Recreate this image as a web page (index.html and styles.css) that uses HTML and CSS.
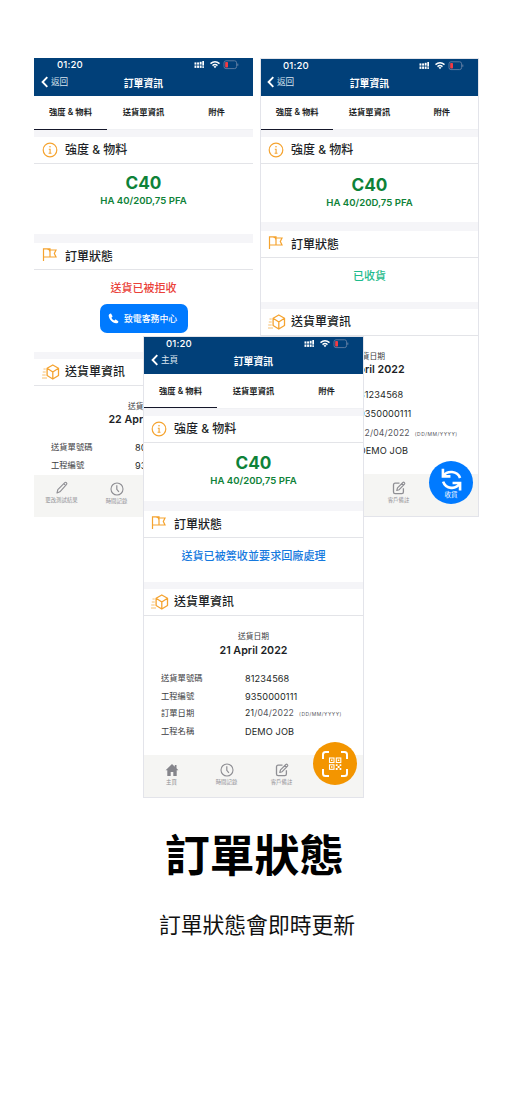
FILE: index.html
```html
<!DOCTYPE html>
<html lang="zh-Hant">
<head>
<meta charset="utf-8">
<title>訂單狀態</title>
<link rel="stylesheet" href="styles.css">
</head>
<body>
<svg class="sprite" aria-hidden="true">
  <symbol id="status" viewBox="0 0 44 10">
    <g fill="#fff"><rect x="0" y="2.4" width="1.9" height="2.2"/><rect x="2.6" y="2.4" width="1.9" height="2.2"/><rect x="5.2" y="1.8" width="1.9" height="2.8"/><rect x="7.8" y="1" width="1.7" height="4.6"/><rect x="0" y="5.5" width="1.9" height="2.4"/><rect x="2.6" y="5.5" width="1.9" height="2.4"/><rect x="5.2" y="5.500" width="1.9" height="2.4"/><rect x="7.8" y="6.300" width="1.7" height="1.600"/></g>
    <g fill="none" stroke="#fff" stroke-width="1.5"><path d="M16 3.600Q20.500 0 25 3.600"/><path d="M18 5.600Q20.500 3.600 23 5.600"/></g><path d="M19 6.600Q20.500 5.500 22 6.600L20.500 8.300Z" fill="#fff"/>
    <rect x="29.500" y=".8" width="12.600" height="7.800" rx="2" fill="none" stroke="#6f87a8" stroke-width=".8"/><rect x="30.700" y="2" width="2.800" height="5.400" rx=".7" fill="#f33b43"/><path d="M43.300 3.600v2.200" stroke="#6f87a8" stroke-width=".9"/>
  </symbol>
  <symbol id="back" viewBox="0 0 8 12"><path d="M6.3 1.2L1.6 6l4.700 4.800" fill="none" stroke="#fff" stroke-width="1.900"/></symbol>
  <symbol id="info" viewBox="0 0 16 16"><circle cx="8" cy="8" r="6.800" fill="none" stroke="#f5a32f" stroke-width="1.200"/><circle cx="8" cy="4.800" r=".8" fill="#f5a32f"/><path d="M6.800 7.300H8.100V11M6.600 11.200H9.500" fill="none" stroke="#f5a32f" stroke-width="1.100"/></symbol>
  <symbol id="flag" viewBox="0 0 16 16"><path d="M1.500 14V1.800H8V10H1.500M8 3H14L12.300 6.500 14 10H8M5 1.800Q8 2 8 5" fill="none" stroke="#f5a32f" stroke-width="1.200"/></symbol>
  <symbol id="box" viewBox="0 0 18 16"><path d="M10.800 1L16.500 4.200V11.500L10.800 15 5.100 11.500V4.200ZM5.100 4.200L10.800 8 16.500 4.200M10.800 8V15" fill="none" stroke="#f5a32f" stroke-width="1.300" stroke-linejoin="round"/><path d="M1.500 5H3.700M.8 8H3.700M.2 11H3.700M0 14H5" fill="none" stroke="#f5b85f" stroke-width=".9"/></symbol>
  <symbol id="phone-call" viewBox="0 0 12 12"><path d="M2.4.7C1.4 1 .6 2 .8 3.4 1.3 7.3 4.8 10.9 8.8 11.3c1.3.1 2.2-.7 2.5-1.6.1-.5 0-.8-.4-1.1L8.8 7.3c-.5-.3-.9-.2-1.2.2l-.7.8C5.500 7.600 4.300 6.400 3.700 5.100l.9-.8c.3-.3.4-.7.2-1.100L3.600 1C3.300.600 2.900.500 2.400.7Z" fill="#fff"/></symbol>
  <symbol id="pencil" viewBox="0 0 14 14"><path d="M2 12l.8-3.400L9.800 1.600c1-.9 2.700.7 1.800 1.800L4.900 10.800ZM8.700 2.700l2 2" fill="none" stroke="#8f8f94" stroke-width="1.100" stroke-linejoin="round"/></symbol>
  <symbol id="clock" viewBox="0 0 14 14"><circle cx="7" cy="7" r="6" fill="none" stroke="#8f8f94" stroke-width="1.100"/><path d="M6.800 3.200V7.400L8.900 9.900" fill="none" stroke="#8f8f94" stroke-width="1.200"/></symbol>
  <symbol id="edit" viewBox="0 0 14 14"><path d="M7.500 2.200H3.200Q1.500 2.200 1.500 3.900V11Q1.500 12.600 3.200 12.600H9.800Q11.400 12.600 11.400 11V7.300" fill="none" stroke="#8f8f94" stroke-width="1.300"/><path d="M4.800 9.500L5.500 6.900 10.900 1.500c1-.8 2.400.5 1.600 1.600L7.200 8.700ZM9.700 2.700L11.300 4.300" fill="none" stroke="#8f8f94" stroke-width="1.200" stroke-linejoin="round"/></symbol>
  <symbol id="home" viewBox="0 0 14 14"><path d="M7 1L.6 7.200H2.300V13H5.700V9H8.300V13H11.700V7.200H13.400L11.500 5.300V2H9.800V3.700Z" fill="#85858b"/></symbol>
  <symbol id="sync" viewBox="0 0 22 22"><g fill="none" stroke="#fff" stroke-width="2.500"><path d="M2.800 .8V8H10M3.200 7.500C7 2.200 16.500 2.500 19.200 9.500"/><path d="M19.200 21.500V14.300H12M18.800 14.800C15.500 20.800 5.500 20.500 3 13"/></g></symbol>
  <symbol id="scan" viewBox="0 0 28 28"><path d="M2 9V4.500Q2 2 4.500 2H8M20 2H23.500Q26 2 26 4.500V9M26 19V23.500Q26 26 23.500 26H20M8 26H4.500Q2 26 2 23.500V19" fill="none" stroke="#fff" stroke-width="2"/><g fill="none" stroke="#fff" stroke-width="1.100"><rect x="8.500" y="8" width="4.500" height="4.500"/><rect x="15.300" y="8" width="4.500" height="4.500"/><rect x="8.500" y="14.800" width="4.500" height="4.500"/></g><path d="M10 9.500h1.500v1.500H10zM16.800 9.500h1.500v1.500h-1.500zM10 16.300h1.500v1.500H10zM14.800 14.300h1.800v1.800h-1.800zM18.600 14.300h1.700v1.800h-1.700zM16.600 16.100h2v2h-2zM14.800 18.100h1.800v1.800h-1.800zM18.600 18.100h1.700v1.800h-1.700z" fill="#fff"/></symbol>
</svg>

<main class="promo">
  <div class="stage">
    <article class="phone rejected">
      <header class="top">
        <div class="statusbar"><b>01:20</b><svg><use href="#status"/></svg></div>
        <div class="nav"><span class="back"><svg><use href="#back"/></svg>返回</span><strong>訂單資訊</strong></div>
      </header>
      <nav class="tabs"><span class="on">強度 &amp; 物料</span><span>送貨單資訊</span><span>附件</span></nav>
      <h2 class="head first"><svg><use href="#info"/></svg>強度 &amp; 物料</h2>
      <section class="mix"><strong>C40</strong><b>HA 40/20D,75 PFA</b></section>
      <h2 class="head flag"><svg><use href="#flag"/></svg><span>訂單狀態</span></h2>
      <section class="state"><p>送貨已被拒收</p><button class="call"><svg><use href="#phone-call"/></svg>致電客務中心</button></section>
      <h2 class="head box"><svg><use href="#box"/></svg>送貨單資訊</h2>
      <section class="detail">
        <p class="cap">送貨日期</p><p class="date">22 April 2022</p>
        <dl><dt>送貨單號碼</dt><dd>80123456</dd><dt>工程編號</dt><dd>9350000111</dd></dl>
      </section>
      <footer class="bar"><span class="pencil"><svg><use href="#pencil"/></svg>更改測試結果</span><span><svg><use href="#clock"/></svg>時間記錄</span></footer>
    </article>

    <article class="phone received framed">
      <header class="top">
        <div class="statusbar"><b>01:20</b><svg><use href="#status"/></svg></div>
        <div class="nav"><span class="back"><svg><use href="#back"/></svg>返回</span><strong>訂單資訊</strong></div>
      </header>
      <nav class="tabs"><span class="on">強度 &amp; 物料</span><span>送貨單資訊</span><span>附件</span></nav>
      <h2 class="head first"><svg><use href="#info"/></svg>強度 &amp; 物料</h2>
      <section class="mix"><strong>C40</strong><b>HA 40/20D,75 PFA</b></section>
      <h2 class="head flag"><svg><use href="#flag"/></svg><span>訂單狀態</span></h2>
      <section class="state"><p>已收貨</p></section>
      <h2 class="head box"><svg><use href="#box"/></svg>送貨單資訊</h2>
      <section class="detail">
        <p class="cap">送貨日期</p><p class="date">22 April 2022</p>
        <dl><dt>送貨單號碼</dt><dd>81234568</dd><dt>工程編號</dt><dd>9350000111</dd><dt>訂單日期</dt><dd class="day">22/04/2022<small>(DD/MM/YYYY)</small></dd><dt>工程名稱</dt><dd>DEMO JOB</dd></dl>
      </section>
      <footer class="bar"><span></span><span></span><span><svg><use href="#edit"/></svg>客戶備註</span></footer>
      <div class="fab"><svg><use href="#sync"/></svg>收貨</div>
    </article>

    <article class="phone returned framed">
      <header class="top">
        <div class="statusbar"><b>01:20</b><svg><use href="#status"/></svg></div>
        <div class="nav"><span class="back"><svg><use href="#back"/></svg>主頁</span><strong>訂單資訊</strong></div>
      </header>
      <nav class="tabs"><span class="on">強度 &amp; 物料</span><span>送貨單資訊</span><span>附件</span></nav>
      <h2 class="head first"><svg><use href="#info"/></svg>強度 &amp; 物料</h2>
      <section class="mix"><strong>C40</strong><b>HA 40/20D,75 PFA</b></section>
      <h2 class="head flag"><svg><use href="#flag"/></svg><span>訂單狀態</span></h2>
      <section class="state"><p>送貨已被簽收並要求回廠處理</p></section>
      <h2 class="head box"><svg><use href="#box"/></svg>送貨單資訊</h2>
      <section class="detail">
        <p class="cap">送貨日期</p><p class="date">21 April 2022</p>
        <dl><dt>送貨單號碼</dt><dd>81234568</dd><dt>工程編號</dt><dd>9350000111</dd><dt>訂單日期</dt><dd class="day"><i>21</i>/04/2022<small>(DD/MM/YYYY)</small></dd><dt>工程名稱</dt><dd>DEMO JOB</dd></dl>
      </section>
      <footer class="bar"><span><svg><use href="#home"/></svg>主頁</span><span><svg><use href="#clock"/></svg>時間記錄</span><span><svg><use href="#edit"/></svg>客戶備註</span></footer>
      <div class="fab"><svg><use href="#scan"/></svg></div>
    </article>
  </div>
  <h1 class="title">訂單狀態</h1>
  <p class="subtitle">訂單狀態會即時更新</p>
</main>
</body>
</html>
```

FILE: styles.css
```css
* { box-sizing: border-box; margin: 0; padding: 0; }
body { background: #fff; color: #1d1f26; font-family: Inter, "Noto Sans CJK TC", sans-serif; white-space: nowrap; }
svg { display: block; flex: none; }
.sprite { position: absolute; width: 0; height: 0; }
.promo { width: 512px; height: 1108px; overflow: hidden; }
.stage { position: relative; height: 798px; }

.phone { position: absolute; width: 219px; display: flex; flex-direction: column; background: #fff; overflow: hidden; }
.rejected { left: 34px; top: 58px; height: 459px; }
.received { left: 260px; top: 58px; height: 459px; }
.returned { left: 143px; top: 336px; width: 221px; height: 462px; }
.framed { border: 1px solid #e3e4ea; }

.top { height: 38px; flex: none; background: #014079; color: #fff; }
.framed .top { height: 37px; }
.statusbar { height: 14px; display: flex; align-items: center; justify-content: space-between; padding: 0 14px 0 23px; }
.statusbar b { font-size: 9.6px; font-weight: 500; line-height: 14px; letter-spacing: .15px; }
.framed .statusbar { padding-left: 22px; height: 13px; }
.statusbar svg { width: 45px; height: 10px; }
.nav { display: grid; grid-template-columns: 1fr auto 1fr; align-items: center; height: 21px; padding-left: 7px; padding-right: 7px; line-height: 20px; }
.back { display: flex; align-items: center; gap: 2px; font-size: 8.6px; color: #dbe5ef; position: relative; top: -1px; }
.received .back { left: -1px; }
.back svg { width: 8px; height: 12px; }
.nav strong { font-size: 9.9px; font-weight: 600; }

.tabs { height: 34px; flex: none; display: grid; grid-template-columns: repeat(3, 1fr); text-align: center; font-size: 8.3px; font-weight: 600; line-height: 33px; border-bottom: 1px solid #f0f1f4; }
.tabs .on { border-bottom: 1px solid #15172a; height: 34px; }
.returned .tabs { height: 35px; line-height: 35px; }

.head { flex: none; display: flex; align-items: center; gap: 7px; padding-left: 8px; font-size: 12px; font-weight: 500; line-height: 26px; border-top: 7px solid #f5f5f8; border-bottom: 1px solid #e3e4e8; height: 34px; }
.framed .head { padding-left: 7px; }
.head svg { width: 16px; height: 16px; }
.head.flag { border-top-width: 9px; height: 36px; }
.head.flag svg { margin-top: -3px; }
.head.flag span { padding-top: 2px; }
.returned .head.flag { border-top-width: 10px; height: 37px; }
.head.box svg { width: 18px; height: 16px; }
.head.box { gap: 5px; }

.mix { height: 58px; flex: none; display: flex; flex-direction: column; align-items: center; color: #0e8238; padding-top: 10px; }
.mix strong { font-size: 17.2px; line-height: 21px; font-weight: 700; }
.mix b { font-size: 9.6px; line-height: 15px; font-weight: 600; }
.rejected .mix { height: 70px; padding-top: 8px; }
.returned .mix { padding-top: 9px; }

.state { height: 45px; flex: none; text-align: center; font-size: 11px; font-weight: 500; padding-top: 9px; }
.state p { line-height: 18px; }
.rejected .state { height: 82px; color: #ea4139; }
.received .state { color: #1fbb8c; height: 44px; }
.returned .state { color: #1579de; font-size: 11.1px; height: 44px; }
.call { display: flex; align-items: center; gap: 5px; width: 88px; height: 29px; margin: 7px auto 0 66px; padding-left: 8px; border: 0; border-radius: 7px; background: #007aff; color: #fff; font: 500 8.9px/28px Inter, "Noto Sans CJK TC", sans-serif; }
.call svg { width: 11px; height: 11px; }

.detail { flex: 1; min-height: 0; }
.cap { text-align: center; font-size: 7.8px; line-height: 12px; padding-top: 14px; color: #3c3c42; }
.date { text-align: center; font-size: 10.7px; font-weight: 600; line-height: 16px; }
.detail dl { display: grid; grid-template-columns: 84px 1fr; grid-auto-rows: 17.7px; padding: 11px 0 0 17px; line-height: 17.7px; }
.detail dt { font-size: 8.3px; color: #3c3c42; }
.detail dd { font-size: 9.2px; letter-spacing: .1px; }
.detail .day { color: #55555c; font-size: 8.6px; letter-spacing: .2px; }
.day i { color: #1d1f26; font-style: normal; }
.day small { font-size: 5px; margin-left: 5px; letter-spacing: .5px; }
.returned .date { padding-top: 1px; }
.received dl { grid-auto-rows: 18.800px; line-height: 18.800px; padding-top: 8px; grid-template-columns: 81px 1fr; }

.bar { height: 42px; flex: none; background: #f5f5f3; display: grid; grid-template-columns: repeat(4, 55px); font-size: 5.4px; line-height: 8px; color: #8f8f94; }
.bar span { display: flex; flex-direction: column; align-items: center; padding-top: 8px; gap: 1px; }
.bar svg { width: 14px; height: 14px; }
.rejected .bar span, .received .bar span { padding-top: 7px; }
.rejected .bar .pencil { padding-top: 6px; }

.fab { position: absolute; width: 44px; height: 43px; border-radius: 50%; display: flex; flex-direction: column; align-items: center; color: #fff; font-size: 6.5px; line-height: 9px; }
.received .fab { left: 168px; top: 402px; background: #007aff; padding-top: 7px; }
.received .fab svg { width: 23px; height: 23px; }
.returned .fab { left: 169px; top: 405px; background: #f39500; justify-content: center; }
.returned .fab svg { width: 28px; height: 28px; }

.title { margin-top: 23px; text-align: center; font: 700 44.8px/64px "Noto Sans CJK TC", sans-serif; color: #000; padding-right: 3px; }
.subtitle { margin-top: 23px; text-align: center; font: 400 21.8px/32px "Noto Sans CJK TC", sans-serif; color: #111; padding-left: 2px; }
```
